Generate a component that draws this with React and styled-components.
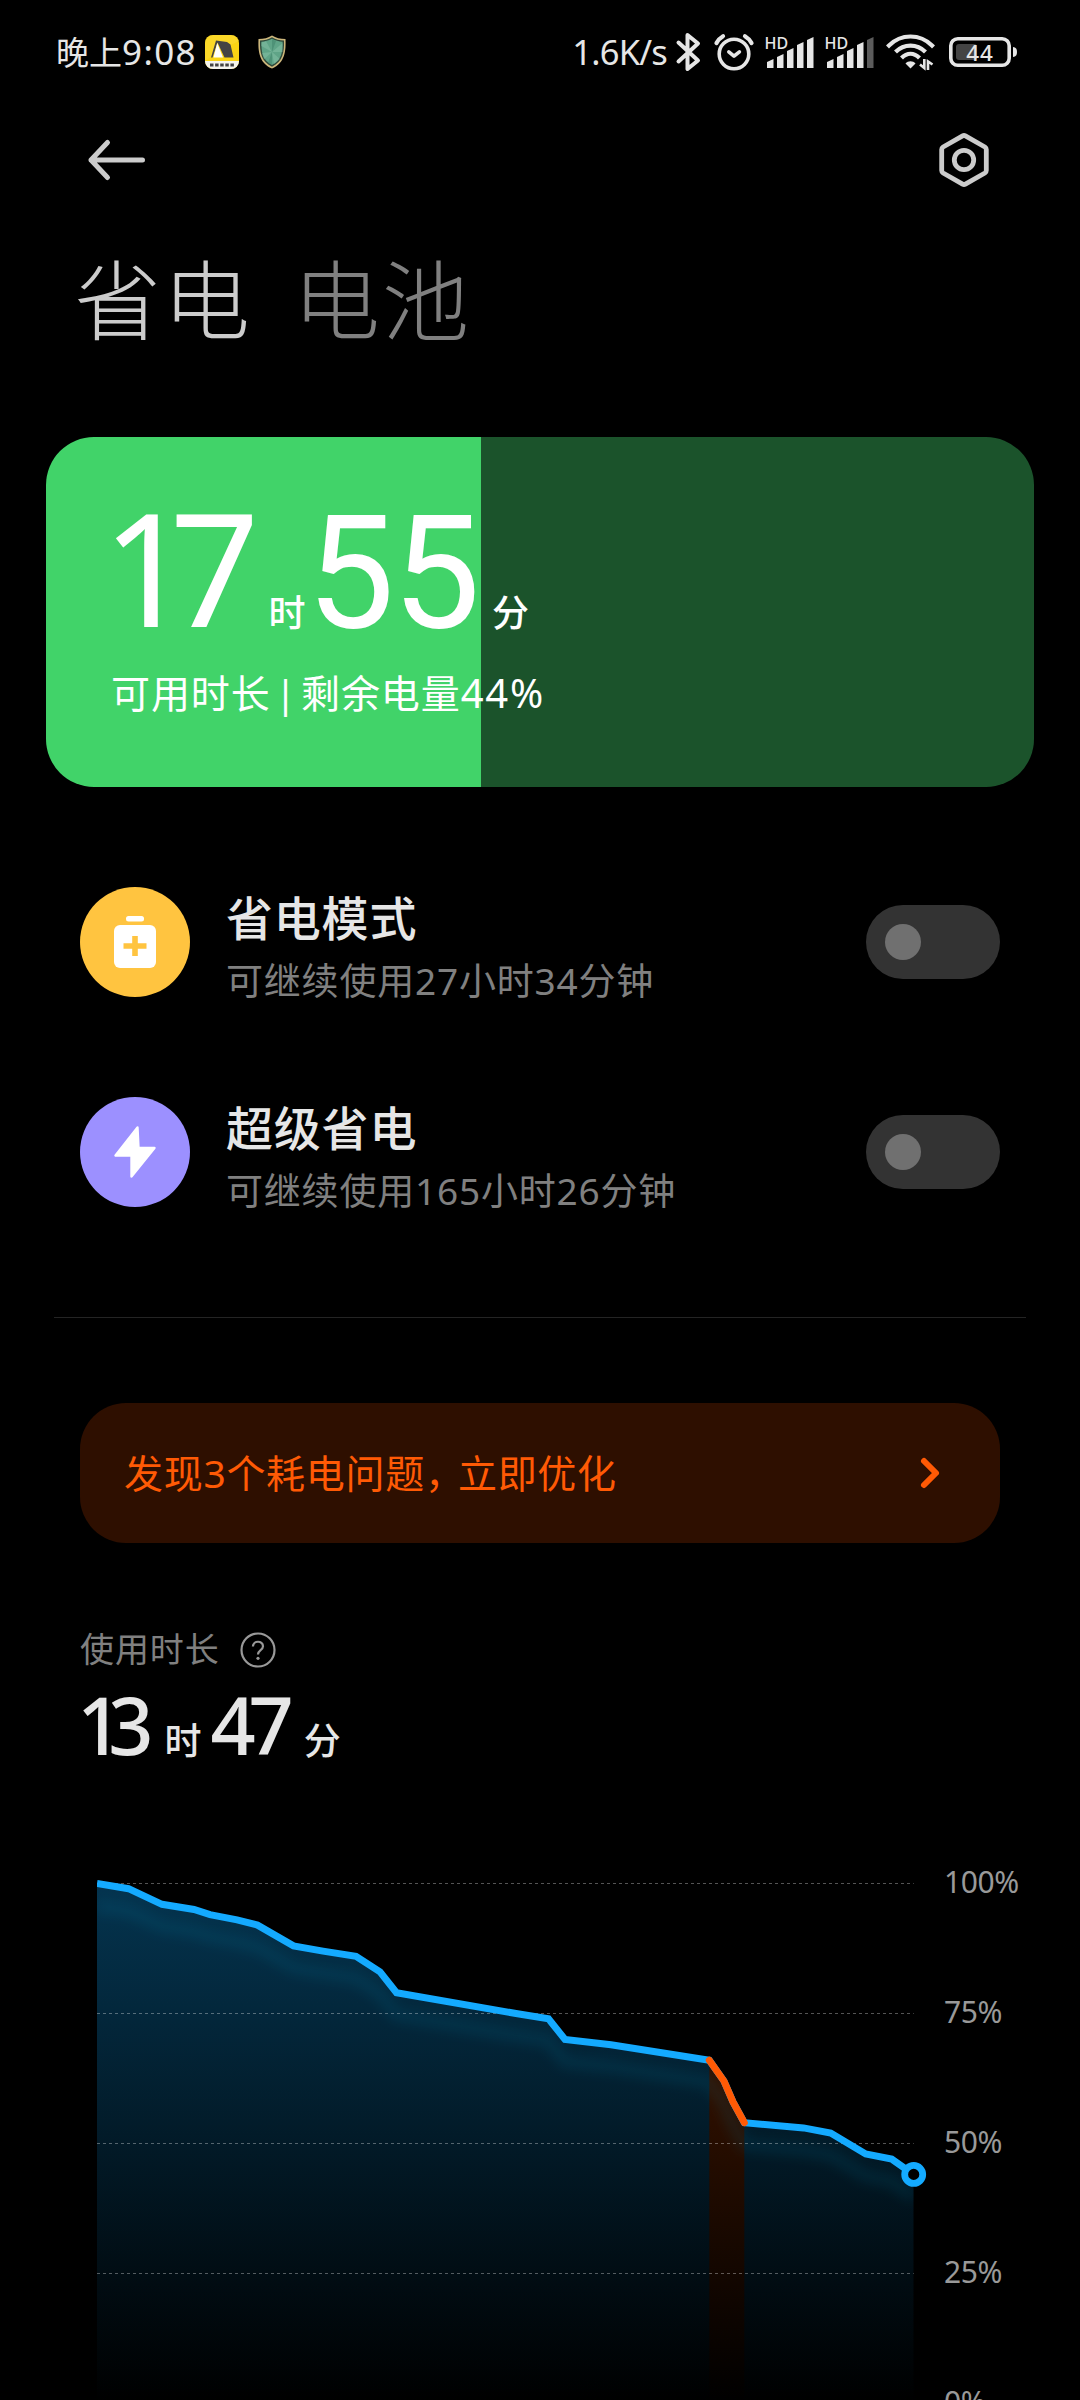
import React from 'react';
import styled, { createGlobalStyle } from 'styled-components';

const GlobalStyle = createGlobalStyle`
  * {
    box-sizing: border-box;
  }

  body {
    margin: 0;
    background: #000;
    font-family: "Noto Sans", "Noto Sans CJK SC", sans-serif;
  }

  svg {
    display: block;
    flex-shrink: 0;
    overflow: visible;
  }
`;

const Screen = styled.div`
  width: 1080px;
  height: 2400px;
  overflow: hidden;
  display: flex;
  flex-direction: column;
  background: #000;
  color: #e6e6e6;
  white-space: nowrap;
  
  > * {
    flex-shrink: 0;
  }
`;

const StatusBar = styled.header`
  height: 104px;
  padding: 0 63px 0 56px;
  display: flex;
  align-items: center;
  justify-content: space-between;
`;

const StatusGroup = styled.div`
  display: flex;
  align-items: center;
`;

const StatusText = styled.span`
  font-size: 34.5px;
  line-height: 40px;
  letter-spacing: -0.8px;
  margin-right: ${props => props.gap || 0}px;
`;

const Clock = styled(StatusText)`
  font-size: 33px;
  letter-spacing: 0;
  
  > span {
    font-size: 35px;
    letter-spacing: 1.4px;
  }
`;

const StatusIcon = styled.span`
  margin-right: ${props => props.gap || 0}px;
`;

const NavBar = styled.nav`
  height: 112px;
  padding: 0 89px 0 86px;
  display: flex;
  align-items: center;
  justify-content: space-between;
`;

const Tabs = styled.div`
  height: 221px;
  padding: 15px 74px 0;
  display: flex;
  align-items: flex-start;
  gap: 41px;
`;

const Tab = styled.span`
  font-family: "Noto Sans CJK SC", sans-serif;
  font-size: 87px;
  line-height: 130px;
  font-weight: 300;
  letter-spacing: 2px;
  color: ${props => props.active ? '#cccccc' : '#808080'};
`;

const RemainCard = styled.section`
  height: 350px;
  margin: 0 46px;
  padding: 57px 65px 0;
  border-radius: 48px;
  background: linear-gradient(
    to right,
    #41d369 ${props => props.level}%,
    #1b532b ${props => props.level}%
  );
  color: #fff;
`;

const Duration = styled.div`
  height: ${props => props.big ? 144 : 76}px;
  display: flex;
  align-items: baseline;
`;

const Digits = styled.span`
  font-family: ${props => props.round ? 'Roboto' : '"Noto Sans"'}, sans-serif;
  font-size: ${props => props.big ? 157 : 79}px;
  font-weight: ${props => props.big ? 400 : 500};
  line-height: ${props => props.big ? 144 : 76}px;
  letter-spacing: ${props => props.spacing}px;
  margin-left: ${props => props.shift || 0}px;
`;

const Unit = styled.span`
  font-size: 37px;
  line-height: 40px;
  font-weight: 500;
  margin: 0 ${props => props.after || 0}px 0 ${props => props.before}px;
`;

const RemainNote = styled.p`
  margin: 25px 0 0;
  font-size: 39px;
  line-height: 60px;
  letter-spacing: 0.9px;
  word-spacing: -7px;
  
  > span {
    font-size: 40px;
    letter-spacing: 1.8px;
  }
`;

const ModeList = styled.section`
  height: 530px;
  padding: 50px 80px 0;
  display: flex;
  flex-direction: column;
`;

const ModeRow = styled.div`
  height: 210px;
  display: flex;
  align-items: center;
`;

const ModeBadge = styled.div`
  width: 110px;
  height: 110px;
  border-radius: 50%;
  display: flex;
  align-items: center;
  justify-content: center;
  background: ${props => props.color};
`;

const ModeText = styled.div`
  flex: 1;
  margin-left: 36px;
  padding-top: 15px;
`;

const ModeTitle = styled.div`
  font-size: 47px;
  line-height: 62px;
  font-weight: 500;
  letter-spacing: 0.8px;
`;

const ModeHint = styled.div`
  font-size: 37px;
  line-height: 64px;
  letter-spacing: 0.8px;
  color: #808080;
`;

const Toggle = styled.div`
  width: 134px;
  height: 74px;
  padding: 19px;
  border-radius: 37px;
  background: #333;
`;

const Knob = styled.div`
  width: 36px;
  height: 36px;
  border-radius: 50%;
  background: #707070;
`;

const Divider = styled.hr`
  width: 972px;
  height: 1px;
  margin: 0 auto;
  border: 0;
  background: #242424;
`;

const LineText = styled.span`
  padding-bottom: 5px;
`;

const IssueBanner = styled.section`
  height: 140px;
  margin: 85px 80px 0;
  padding: 0 58px 0 44px;
  border-radius: 46px;
  display: flex;
  align-items: center;
  justify-content: space-between;
  background: #2e0f00;
  color: #ff5a05;
  font-size: 39px;
  letter-spacing: 0.7px;
`;

const Comma = styled.span`
  letter-spacing: -6px;
`;

const Usage = styled.section`
  padding: 82px 80px 0;
`;

const UsageLabel = styled.div`
  height: 50px;
  display: flex;
  align-items: center;
  gap: 20px;
  font-size: 34px;
  letter-spacing: 0.9px;
  color: #808080;
`;

const UsageTime = styled.div`
  margin-top: 12px;
`;

const ChartRow = styled.section`
  display: flex;
  align-items: flex-start;
  margin: 104px 0 0 97px;
`;

const Scale = styled.div`
  margin-left: 15px;
  padding-top: 1px;
  color: #999;
  font-size: 30px;
  letter-spacing: -0.4px;
`;

const ScaleLabel = styled.div`
  height: 130px;
  line-height: 28px;
`;

const YellowAppIcon = () => (
    <svg width="34" height="34" viewBox="0 0 34 34">
        <defs>
            <clipPath id="appShape"><rect width="34" height="34" rx="8"/></clipPath>
        </defs>
        <g clipPath="url(#appShape)">
            <rect width="34" height="34" fill="#fad414"/>
            <path d="M18 14L34 6V0H0v26z" fill="#fbdc3c" opacity="0.5"/>
            <rect y="26" width="34" height="8" fill="#f4f4ee"/>
            <path d="M11 5.500L22 7L25.500 9.500L28.500 22.500H19.500L12.500 7.500L7.500 22.500H6z" fill="#444"/>
            <path d="M12.200 8L18 22.500H8.500z" fill="#fff"/>
            <path d="M5 30h24" stroke="#444" strokeWidth="3" strokeDasharray="3.500 1.600"/>
        </g>
    </svg>
);

const ShieldIcon = () => (
    <svg width="28" height="34" viewBox="0 0 28 34">
        <path d="M14 0.500C18 3 22 4 27.500 4C28 16 27 28 14 33.500C1 28 0 16 0.500 4C6 4 10 3 14 0.500z" fill="#cdb77c"/>
        <path d="M14 2.200C18 4.500 21.500 5.300 26 5.500C26.300 17 25 26.500 14 31.800C3 26.500 1.700 17 2 5.500C6.500 5.300 10 4.500 14 2.200z" fill="#2f4a3c"/>
        <path d="M14 3.800C17.500 5.700 21 6.500 24.600 6.700C24.800 17 23.500 25 14 30C4.500 25 3.200 17 3.400 6.700C7 6.500 10.500 5.700 14 3.800z" fill="#5fa487"/>
        <path d="M14 17L8 6.300L3.400 7.500V11zM14 17L24.600 8V17zM14 17L22 24L16 29zM14 17L4 18L6 24.500z" fill="#8cc6aa" opacity="0.45"/>
        <path d="M14 17L14 4L18 6zM14 17L10 28L14 30z" fill="#3d7f68" opacity="0.5"/>
    </svg>
);

const BluetoothIcon = () => (
    <svg width="25" height="40" viewBox="0 0 25 40" fill="none" stroke="#e6e6e6" strokeWidth="4" strokeLinejoin="round" strokeLinecap="round">
        <path d="M2.500 10.500L22 28.500L11.500 37V3L22 11.500L2.500 29.500"/>
    </svg>
);

const AlarmIcon = () => (
    <svg width="40" height="38" viewBox="0 0 40 38" fill="none" stroke="#e6e6e6" strokeWidth="3.600" strokeLinecap="round">
        <circle cx="20" cy="21" r="14.800"/>
        <path d="M14.800 18.800L20 23.200L25.400 18.800" strokeLinejoin="round"/>
        <path d="M2.500 10C4 7 6 5 9 3.200M37.500 10C36 7 34 5 31 3.200" strokeWidth="4.200"/>
    </svg>
);

const bars = [[2, 25], [12, 20], [22, 14], [32, 8], [42, 3]];

const SignalIcon = ({ level }) => (
    <svg width="51" height="38" viewBox="0 0 51 38">
        <text x="-0.500" y="15.500" fontSize="16" fontWeight="500" fill="#e6e6e6">HD</text>
        {
            bars.map(([x, y], i) => (
                <path
                    key={x}
                    d={`M${x} ${y + 4}L${x + 6.5} ${y + 1}V35H${x}z`}
                    fill={i < level ? '#e6e6e6' : '#5c5c5c'}
                />
            ))
        }
    </svg>
);

const WifiIcon = () => (
    <svg width="48" height="38" viewBox="0 0 48 38" fill="none" stroke="#e6e6e6" strokeWidth="4.200">
        <path d="M2 12.500C14 0.500 33 0.500 45 12.500" strokeLinecap="square"/>
        <path d="M8.500 19C17 10.500 30 10.500 38.500 19"/>
        <path d="M14.500 25C20 19.500 27 19.500 32.500 25"/>
        <path d="M23.500 35.500L18.500 30.500C21 27.500 26 27.500 28.500 30.500z" fill="#e6e6e6" stroke="none"/>
        <path d="M37.300 26V35L33 31.500M41 37V28.500L45.500 31.500" strokeWidth="2.600"/>
    </svg>
);

const BatteryIcon = () => (
    <svg width="68" height="30" viewBox="0 0 68 30">
        <rect x="1.800" y="1.800" width="58.400" height="26.400" rx="7" fill="none" stroke="#e6e6e6" strokeWidth="3.600"/>
        <rect x="7" y="7" width="21" height="16" rx="3" fill="#444"/>
        <path d="M64 10C67 10.500 68 12 68 15S67 19.500 64 20z" fill="#e6e6e6"/>
        <text x="31" y="23.500" fontSize="22.500" fontWeight="500" fill="#e6e6e6" textAnchor="middle" letterSpacing="1">44</text>
    </svg>
);

const BackIcon = () => (
    <svg width="60" height="44" viewBox="0 0 60 44" fill="none" stroke="#ccc" strokeWidth="5" strokeLinecap="round" strokeLinejoin="round">
        <path d="M21.500 4.500L5 22L21.500 39.500M5 22H56.500"/>
    </svg>
);

const SettingsIcon = () => (
    <svg width="54" height="56" viewBox="0 0 54 56" fill="none" stroke="#ccc" strokeWidth="4.800" strokeLinejoin="round">
        <path d="M25.600 3.900Q27 3.100 28.400 3.900L47.900 15Q49.300 15.900 49.300 17.500V38.500Q49.300 40.100 47.900 41L28.400 52.100Q27 52.900 25.600 52.100L6.100 41Q4.700 40.100 4.700 38.500V17.500Q4.700 15.900 6.100 15z"/>
        <circle cx="27" cy="28" r="9.700"/>
    </svg>
);

const BatteryPlusIcon = () => (
    <svg width="42" height="52" viewBox="0 0 42 52">
        <rect x="12" y="0" width="18" height="5.500" rx="2.500" fill="#fff"/>
        <rect x="0" y="9" width="42" height="43" rx="6" fill="#fff"/>
        <path d="M21 20v20M9.500 30h23" stroke="#ffc440" strokeWidth="5.600" strokeLinecap="butt"/>
    </svg>
);

const BoltIcon = () => (
    <svg width="42" height="52" viewBox="0 0 42 52">
        <path d="M23.500 1.500L1.500 29.500H17.500V50.500L40.500 22H24.500z" fill="#fff" stroke="#fff" strokeWidth="2.400" strokeLinejoin="round"/>
    </svg>
);

const ChevronIcon = () => (
    <svg width="24" height="34" viewBox="0 0 24 34" fill="none" stroke="#ff5a05" strokeWidth="6" strokeLinecap="round" strokeLinejoin="round">
        <path d="M6 5L18 17L6 29"/>
    </svg>
);

const HelpIcon = () => (
    <svg width="36" height="36" viewBox="0 0 36 36">
        <circle cx="18" cy="18" r="16.500" fill="none" stroke="#999" strokeWidth="2.200"/>
        <path d="M12.900 14.600C12.900 8.200 23 8.200 23 14.300C23 18.300 18 18 18 22.500" fill="none" stroke="#999" strokeWidth="2.200"/>
        <circle cx="18" cy="26.300" r="1.600" fill="#999"/>
    </svg>
);

const modes = [
    { title: '省电模式', hint: '可继续使用27小时34分钟', color: '#ffc440', Icon: BatteryPlusIcon },
    { title: '超级省电', hint: '可继续使用165小时26分钟', color: '#9c90ff', Icon: BoltIcon },
];

// [x, battery percent]
const history = [
    [0, 100], [31.5, 99], [65, 96], [97, 95], [113, 94], [140, 93], [160.5, 92],
    [196.5, 88], [226, 87], [259, 86], [283, 83], [299.5, 79], [419, 75],
    [451.5, 74], [468, 70], [514, 69], [612.3, 66], [627, 62], [636, 58],
    [647.3, 54], [706.5, 53], [733.7, 52], [768.7, 48], [794.7, 47], [816.7, 44],
];
const DRAIN_START = 16;
const DRAIN_END = 19;

const toY = percent => 16.5 + (100 - percent) * 5.2;
const toPoints = list => list.map(([x, p]) => `${x},${toY(p)}`).join(' ');

const BatteryChart = () => {
    const line = toPoints(history);
    const drain = history.slice(DRAIN_START, DRAIN_END + 1);
    const drainX = drain[0][0];
    const drainWidth = drain[drain.length - 1][0] - drainX;
    const [endX, endPercent] = history[history.length - 1];

    return (
        <svg width="832" height="536" viewBox="0 0 832 536">
            <defs>
                <linearGradient id="blueFill" gradientUnits="userSpaceOnUse" x1="0" y1="16" x2="0" y2="536">
                    <stop offset="0" stopColor="#04344f"/>
                    <stop offset="1" stopColor="#000"/>
                </linearGradient>
                <linearGradient id="orangeFill" gradientUnits="userSpaceOnUse" x1="0" y1="16" x2="0" y2="536">
                    <stop offset="0" stopColor="#4c1a00"/>
                    <stop offset="1" stopColor="#000"/>
                </linearGradient>
                <clipPath id="area">
                    <polygon points={`${line} ${endX},536 0,536`}/>
                </clipPath>
                <clipPath id="plot">
                    <rect width={endX} height="536"/>
                </clipPath>
                <filter id="soft" filterUnits="userSpaceOnUse" x="-40" y="-40" width="920" height="600">
                    <feGaussianBlur stdDeviation="6"/>
                </filter>
            </defs>
            <g clipPath="url(#area)">
                <rect width={endX} height="536" fill="url(#blueFill)"/>
                <rect x={drainX} width={drainWidth} height="536" fill="url(#orangeFill)"/>
                <polyline
                    points={line}
                    transform="translate(0 22)"
                    fill="none"
                    stroke="#12a0d0"
                    strokeOpacity="0.1"
                    strokeWidth="13"
                    filter="url(#soft)"
                />
            </g>
            {
                [100, 75, 50, 25].map(p => (
                    <path
                        key={p}
                        d={`M0 ${Math.floor(toY(p)) + 0.5}H${endX}`}
                        stroke="#fff"
                        strokeOpacity="0.33"
                        strokeDasharray="3 3"
                    />
                ))
            }
            <g fill="none" strokeWidth="7">
                <polyline clipPath="url(#plot)" points={line} stroke="#14aaff"/>
                <polyline points={toPoints(drain)} stroke="#ff5a05" strokeLinecap="round"/>
            </g>
            <circle cx={endX} cy={toY(endPercent) - 0.3} r="9" fill="#000" stroke="#14aaff" strokeWidth="6.800"/>
        </svg>
    );
};

const App = () => {
    return (
        <Screen>
            <GlobalStyle/>
            <StatusBar>
                <StatusGroup>
                    <Clock gap={8}>晚上<span>9:08</span></Clock>
                    <StatusIcon gap={19}><YellowAppIcon/></StatusIcon>
                    <ShieldIcon/>
                </StatusGroup>
                <StatusGroup>
                    <StatusText gap={9}>1.6K/s</StatusText>
                    <StatusIcon gap={13}><BluetoothIcon/></StatusIcon>
                    <StatusIcon gap={11}><AlarmIcon/></StatusIcon>
                    <StatusIcon gap={9}><SignalIcon level={5}/></StatusIcon>
                    <StatusIcon gap={11}><SignalIcon level={4}/></StatusIcon>
                    <StatusIcon gap={14}><WifiIcon/></StatusIcon>
                    <BatteryIcon/>
                </StatusGroup>
            </StatusBar>

            <NavBar>
                <BackIcon/>
                <SettingsIcon/>
            </NavBar>

            <Tabs>
                <Tab active>省电</Tab>
                <Tab>电池</Tab>
            </Tabs>

            <RemainCard level={44}>
                <Duration big>
                    <Digits big spacing={-22} shift={-9}>17</Digits>
                    <Unit before={31} after={1}>时</Unit>
                    <Digits big round spacing={-2.5}>55</Digits>
                    <Unit before={14}>分</Unit>
                </Duration>
                <RemainNote>可用时长 | 剩余电量<span>44%</span></RemainNote>
            </RemainCard>

            <ModeList>
                {
                    modes.map(({ title, hint, color, Icon }) => (
                        <ModeRow key={title}>
                            <ModeBadge color={color}><Icon/></ModeBadge>
                            <ModeText>
                                <ModeTitle>{title}</ModeTitle>
                                <ModeHint>{hint}</ModeHint>
                            </ModeText>
                            <Toggle><Knob/></Toggle>
                        </ModeRow>
                    ))
                }
            </ModeList>

            <Divider/>

            <IssueBanner>
                <LineText>发现3个耗电问题<Comma>，</Comma>立即优化</LineText>
                <ChevronIcon/>
            </IssueBanner>

            <Usage>
                <UsageLabel><LineText>使用时长</LineText><HelpIcon/></UsageLabel>
                <UsageTime>
                    <Duration>
                        <Digits spacing={-14} shift={-3}>13</Digits>
                        <Unit before={25} after={9}>时</Unit>
                        <Digits spacing={-7}>47</Digits>
                        <Unit before={17}>分</Unit>
                    </Duration>
                </UsageTime>
            </Usage>

            <ChartRow>
                <BatteryChart/>
                <Scale>
                    {
                        [100, 75, 50, 25, 0].map(p => <ScaleLabel key={p}>{p}%</ScaleLabel>)
                    }
                </Scale>
            </ChartRow>
        </Screen>
    );
};

export default App;
